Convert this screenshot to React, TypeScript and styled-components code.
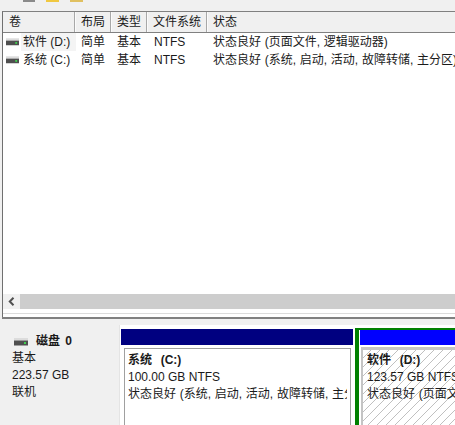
import React from "react";
import styled, { createGlobalStyle } from "styled-components";

const Global = createGlobalStyle`
  html, body { margin: 0; padding: 0; background: #f0f0f0; }
  #root { width: 455px; height: 425px; overflow: hidden; }
  * { box-sizing: border-box; }
`;
const FONT = `"Liberation Sans", "Noto Sans CJK SC", sans-serif`;

const Page = styled.div`
  width: 455px; height: 425px; display: flex; flex-direction: column; overflow: hidden;
  background: #f0f0f0; font-family: ${FONT}; font-size: 12px; color: #1a1a1a;
`;
const Toolbar = styled.div`
  height: 11px; flex: none; display: flex; gap: 11px; padding-left: 23px; align-items: flex-start;
`;
const ToolIcon = styled.div<{ $c: string; $w: number }>`
  width: ${(p) => p.$w}px; height: 2px; background: ${(p) => p.$c};
`;
const ListPane = styled.div`
  flex: none; height: 306px; margin-left: 2px; display: flex; flex-direction: column;
  border-top: 1px solid #808080; border-left: 1px solid #707070; background: #fff;
`;
const Header = styled.div`
  height: 21px; flex: none; display: flex; background: #f0f0f0; border-bottom: 1px solid #808080;
`;
const Th = styled.div<{ $w?: number; $pad: number }>`
  width: ${(p) => (p.$w ? `${p.$w}px` : "auto")}; flex: ${(p) => (p.$w ? "none" : 1)};
  padding-left: ${(p) => p.$pad}px; line-height: 21px; white-space: nowrap;
  ${(p) => (p.$w ? "border-right: 1px solid #fbfbfb; box-shadow: inset -1px 0 #a8a8a8;" : "")}
`;
const Rows = styled.div`
  flex: 1;
`;
const Row = styled.div`
  height: 18px; display: flex; line-height: 18px; white-space: nowrap;
`;
const Td = styled.div<{ $w?: number; $pad: number }>`
  width: ${(p) => (p.$w ? `${p.$w}px` : "auto")}; flex: ${(p) => (p.$w ? "none" : 1)};
  padding-left: ${(p) => p.$pad}px; display: flex; align-items: center; gap: 2px;
`;
const Name = styled.span<{ $sel?: boolean }>`
  flex: 1; align-self: stretch; padding-left: 2px;
  background: ${(p) => (p.$sel ? "#f4f4f4" : "transparent")};
`;
const Status = styled.span`
  word-spacing: 0.4px;
`;
const ScrollBar = styled.div`
  height: 15px; flex: none; display: flex; margin-bottom: 4px;
`;
const Arrow = styled.div`
  width: 17px; background: #f0f0f0; display: flex; align-items: center; justify-content: center;
`;
const Thumb = styled.div`
  flex: 1; background: #cdcdcd;
`;
const ScrollEdge = styled.div`
  height: 1px; flex: none; margin-bottom: 3px; background: #dcdcdc;
`;
const Divider = styled.div`
  height: 2px; flex: none; margin-left: 2px; background: #808080;
`;
const DiskPane = styled.div`
  flex: 1; display: flex; min-height: 0;
`;
const DiskInfo = styled.div`
  width: 119px; flex: none; padding: 14px 0 0 12px; line-height: 17px;
`;
const DiskTitle = styled.div`
  display: flex; align-items: center; gap: 8px; height: 17px; padding-left: 2px;
  font-weight: 700; word-spacing: 2px;
`;
const Volumes = styled.div`
  flex: 1; display: flex; gap: 2px; margin-top: 6px; padding-left: 1px; min-width: 0;
  overflow: hidden; background: #fff; border-left: 1px solid #e4e4e4;
`;
const Volume = styled.div<{ $w: number }>`
  width: ${(p) => p.$w}px; flex: none; display: flex; flex-direction: column; padding-top: 4px;
`;
const ActiveVolume = styled.div<{ $w: number }>`
  width: ${(p) => p.$w}px; flex: none; display: flex; flex-direction: column;
  margin-top: 3px; padding: 0 0 0 1px;
  border-top: 2px solid #008000; border-left: 4px solid #008000;
`;
const VolumeBar = styled.div<{ $c: string; $h: number }>`
  height: ${(p) => p.$h}px; flex: none; background: ${(p) => p.$c};
`;
const VolumeBody = styled.div`
  flex: 1; min-height: 0; margin: 3px 2px 0 3px; padding: 3px 3px 0 3px; line-height: 17px;
  border: 1px solid #a0a0a0; border-bottom: none; background: #fff;
`;
const HatchBody = styled.div`
  flex: 1; min-height: 0; margin: 2px 0 0 1px; padding: 2px 0 0 4px; line-height: 17px;
  border-top: 3px solid #c4c4c4; border-left: 2px solid #c4c4c4;
  background: repeating-linear-gradient(135deg, #fff 0 5.6px, #c0c0c0 5.6px 6.36px);
`;
const VolumeText = styled.div`
  white-space: nowrap; overflow: hidden;
`;
const VolumeTitle = styled.div`
  font-weight: 700; word-spacing: 1px;
`;

function DiskIcon({ w }: { w: number }) {
  return (
    <svg width={w} height="8" viewBox="0 0 14 8" style={{ flex: "none" }}>
      <rect x="0" y="0" width="14" height="2.5" fill="#dcdcdc" />
      <rect x="0" y="2.5" width="14" height="5" fill="#4f4f4f" />
      <rect x="10" y="4" width="2" height="2" fill="#3fd04f" />
    </svg>
  );
}

export default function App() {
  return (
    <Page>
      <Global />
      <Toolbar>
        <ToolIcon $c="#8a8a8a" $w={12} />
        <ToolIcon $c="#f0c840" $w={13} />
        <ToolIcon $c="#e0c060" $w={13} />
      </Toolbar>
      <ListPane>
        <Header>
          <Th $w={73} $pad={6}>卷</Th>
          <Th $w={36} $pad={5}>布局</Th>
          <Th $w={36} $pad={5}>类型</Th>
          <Th $w={60} $pad={5}>文件系统</Th>
          <Th $pad={5}>状态</Th>
        </Header>
        <Rows>
          <Row>
            <Td $w={73} $pad={3}><DiskIcon w={13} /><Name $sel>软件 (D:)</Name></Td>
            <Td $w={36} $pad={5}>简单</Td>
            <Td $w={36} $pad={5}>基本</Td>
            <Td $w={60} $pad={6}>NTFS</Td>
            <Td $pad={5}><Status>状态良好 (页面文件, 逻辑驱动器)</Status></Td>
          </Row>
          <Row>
            <Td $w={73} $pad={3}><DiskIcon w={13} /><Name>系统 (C:)</Name></Td>
            <Td $w={36} $pad={5}>简单</Td>
            <Td $w={36} $pad={5}>基本</Td>
            <Td $w={60} $pad={6}>NTFS</Td>
            <Td $pad={5}><Status>状态良好 (系统, 启动, 活动, 故障转储, 主分区)</Status></Td>
          </Row>
        </Rows>
        <ScrollBar>
          <Arrow>
            <svg width="7" height="9" viewBox="0 0 7 9">
              <path d="M5.5 0.8 L1.8 4.5 L5.5 8.2" fill="none" stroke="#505050" strokeWidth="2" />
            </svg>
          </Arrow>
          <Thumb />
        </ScrollBar>
        <ScrollEdge />
      </ListPane>
      <Divider />
      <DiskPane>
        <DiskInfo>
          <DiskTitle><DiskIcon w={14} />磁盘 0</DiskTitle>
          <div>基本</div>
          <div>223.57 GB</div>
          <div>联机</div>
        </DiskInfo>
        <Volumes>
          <Volume $w={232}>
            <VolumeBar $c="#000080" $h={16} />
            <VolumeBody>
              <VolumeText>
                <VolumeTitle>系统 &nbsp;(C:)</VolumeTitle>
                <div>100.00 GB NTFS</div>
                <Status>状态良好 (系统, 启动, 活动, 故障转储, 主分区)</Status>
              </VolumeText>
            </VolumeBody>
          </Volume>
          <ActiveVolume $w={110}>
            <VolumeBar $c="#0000ff" $h={15} />
            <HatchBody>
              <VolumeText>
                <VolumeTitle>软件 &nbsp;(D:)</VolumeTitle>
                <div>123.57 GB NTFS</div>
                <Status>状态良好 (页面文件, 逻辑驱动器)</Status>
              </VolumeText>
            </HatchBody>
          </ActiveVolume>
        </Volumes>
      </DiskPane>
    </Page>
  );
}
